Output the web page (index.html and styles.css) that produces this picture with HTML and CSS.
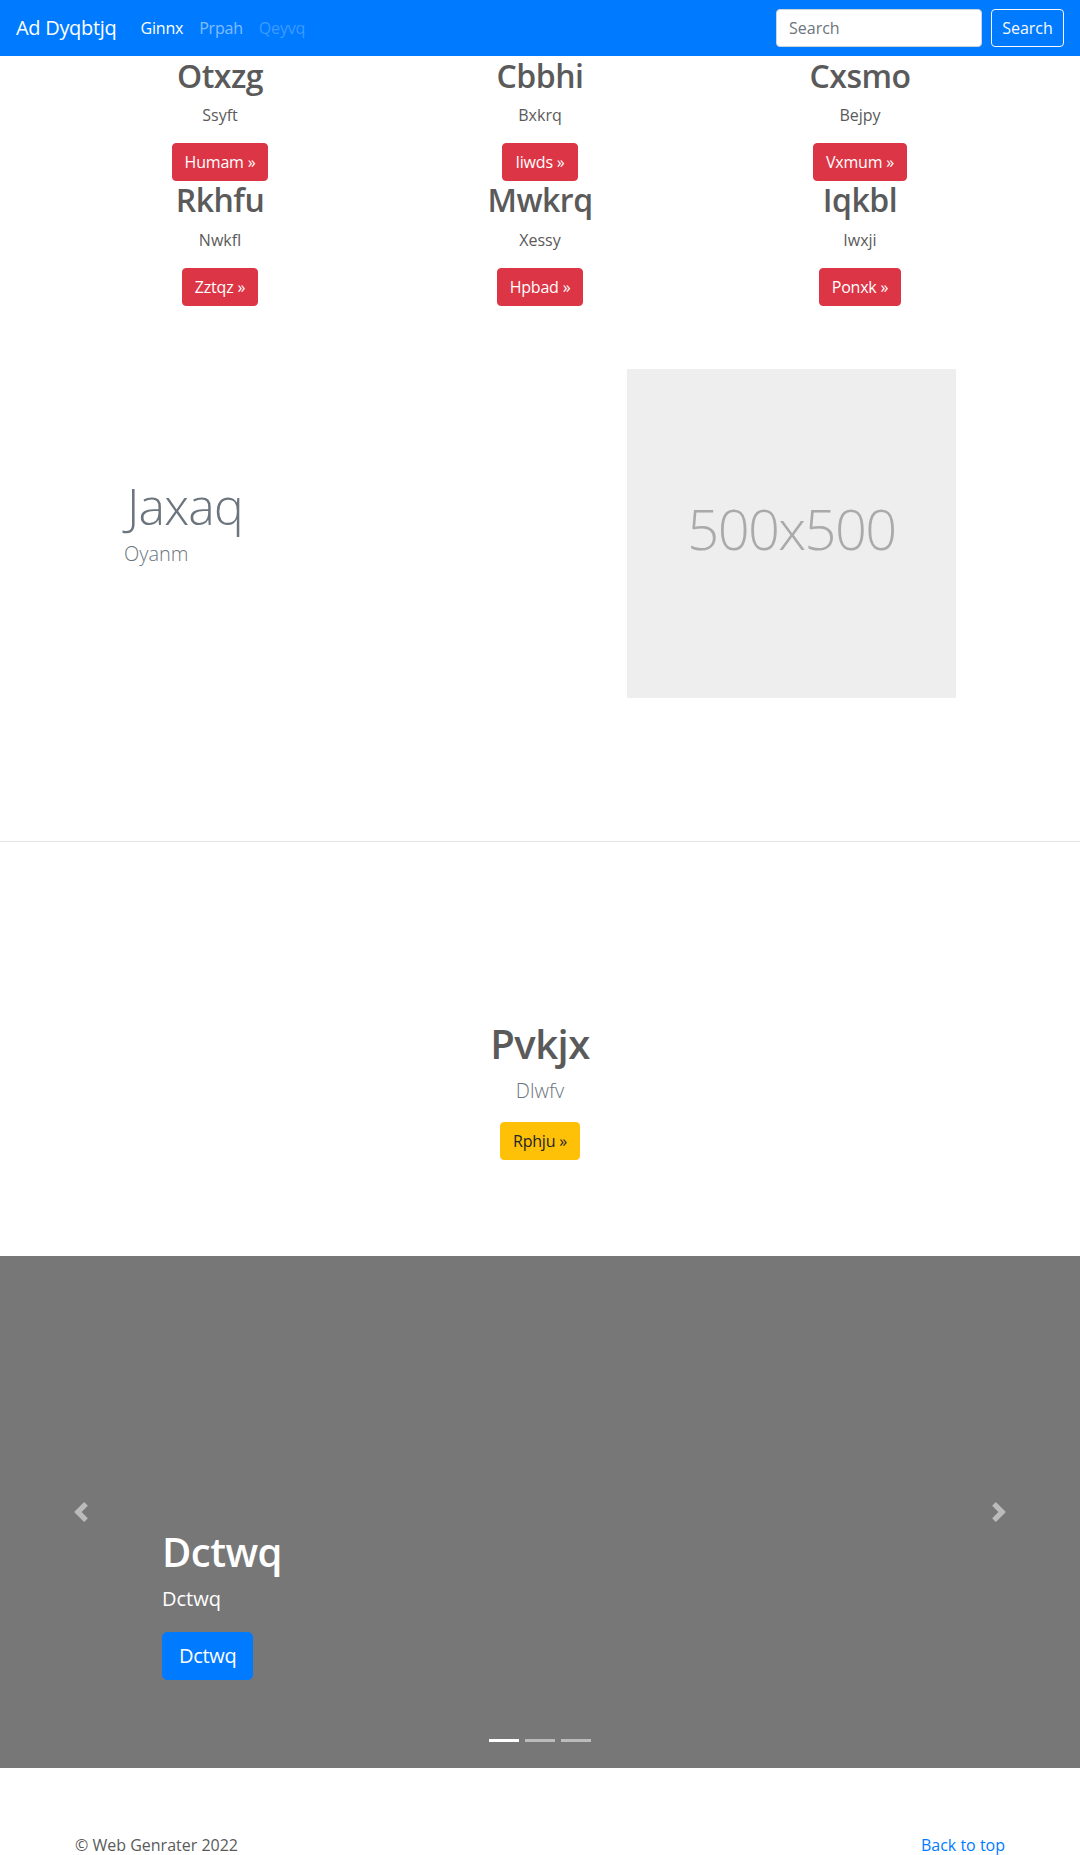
FILE: index.html
```html
<!DOCTYPE html>
<html lang="en">
<head>
<meta charset="utf-8">
<title>Ad Dyqbtjq</title>
<link rel="stylesheet" href="styles.css">
</head>
<body>
<header class="navbar">
  <a class="brand" href="#">Ad Dyqbtjq</a>
  <nav class="nav">
    <a class="nav-link active" href="#">Ginnx</a>
    <a class="nav-link" href="#">Prpah</a>
    <a class="nav-link disabled" href="#">Qeyvq</a>
  </nav>
  <form class="search">
    <input class="search-input" type="text" placeholder="Search">
    <button class="btn btn-outline-light" type="button">Search</button>
  </form>
</header>

<main>
  <section class="cards">
    <div class="card-item"><h2>Otxzg</h2><p>Ssyft</p><a class="btn btn-danger" href="#">Humam &raquo;</a></div>
    <div class="card-item"><h2>Cbbhi</h2><p>Bxkrq</p><a class="btn btn-danger" href="#">Iiwds &raquo;</a></div>
    <div class="card-item"><h2>Cxsmo</h2><p>Bejpy</p><a class="btn btn-danger" href="#">Vxmum &raquo;</a></div>
    <div class="card-item"><h2>Rkhfu</h2><p>Nwkfl</p><a class="btn btn-danger" href="#">Zztqz &raquo;</a></div>
    <div class="card-item"><h2>Mwkrq</h2><p>Xessy</p><a class="btn btn-danger" href="#">Hpbad &raquo;</a></div>
    <div class="card-item"><h2>Iqkbl</h2><p>Iwxji</p><a class="btn btn-danger" href="#">Ponxk &raquo;</a></div>
  </section>

  <section class="featurette">
    <div class="featurette-text">
      <h2 class="featurette-heading">Jaxaq</h2>
      <p class="lead">Oyanm</p>
    </div>
    <svg class="placeholder" width="329" height="329" viewBox="0 0 329 329" role="img" aria-label="500x500">
      <rect width="100%" height="100%" fill="#eee"></rect>
      <text x="50%" y="50%" fill="#aaa" dy=".3em" text-anchor="middle">500x500</text>
    </svg>
  </section>

  <hr class="divider">

  <section class="cta">
    <h1>Pvkjx</h1>
    <p class="lead">Dlwfv</p>
    <a class="btn btn-warning" href="#">Rphju &raquo;</a>
  </section>

  <section class="carousel">
    <a class="carousel-control prev" href="#" aria-label="Previous">
      <svg width="20" height="20" viewBox="0 0 8 8"><path fill="#fff" d="M5.25 0l-4 4 4 4 1.5-1.5L4.25 4l2.5-2.5L5.25 0z"/></svg>
    </a>
    <div class="carousel-caption">
      <h1>Dctwq</h1>
      <p>Dctwq</p>
      <div><a class="btn btn-lg btn-primary" href="#">Dctwq</a></div>
    </div>
    <a class="carousel-control next" href="#" aria-label="Next">
      <svg width="20" height="20" viewBox="0 0 8 8"><path fill="#fff" d="M2.75 0l-1.5 1.5L3.75 4l-2.5 2.5L2.75 8l4-4-4-4z"/></svg>
    </a>
    <ol class="indicators">
      <li class="active"></li>
      <li></li>
      <li></li>
    </ol>
  </section>
</main>

<footer class="footer">
  <p>&copy; Web Genrater 2022</p>
  <a href="#">Back to top</a>
</footer>
</body>
</html>
```

FILE: styles.css
```css
* { box-sizing: border-box; }

html, body { margin: 0; padding: 0; }

body {
  font-family: "Segoe UI", "Open Sans", "Noto Sans", "Liberation Sans", sans-serif;
  font-size: 16px;
  line-height: 1.5;
  color: #5a5a5a;
  background: #fff;
}

a { text-decoration: none; }

h1, h2, p { margin: 0; }

/* Navbar */
.navbar {
  display: flex;
  align-items: center;
  height: 56px;
  padding: 8px 16px;
  background: #007bff;
}
.brand {
  font-size: 20px;
  line-height: 30px;
  padding: 5px 0;
  margin-right: 16px;
  letter-spacing: -0.3px;
  color: #fff;
}
.nav { display: flex; }
.nav-link {
  padding: 8px;
  line-height: 24px;
  letter-spacing: -0.2px;
  color: rgba(255, 255, 255, .5);
}
.nav-link.active { color: #fff; }
.nav-link.disabled { color: rgba(255, 255, 255, .25); }

.search {
  margin-left: auto;
  display: flex;
  align-items: center;
}
.search-input {
  width: 206px;
  height: 38px;
  margin-right: 9px;
  padding: 6px 12px;
  font: inherit;
  color: #495057;
  background: #fff;
  border: 1px solid #ced4da;
  border-radius: 4px;
}
.search-input::placeholder { color: #6c757d; }

/* Buttons */
.btn {
  display: inline-block;
  padding: 6px 12px;
  font-family: inherit;
  font-size: 16px;
  line-height: 24px;
  border: 1px solid transparent;
  border-radius: 4px;
  vertical-align: middle;
  cursor: pointer;
}
.btn-outline-light {
  width: 73px;
  padding: 6px 0;
  text-align: center;
  color: #f8f9fa;
  background: transparent;
  border-color: #f8f9fa;
}
.btn-danger { color: #fff; background: #dc3545; border-color: #dc3545; letter-spacing: -0.2px; }
.btn-warning { color: #212529; background: #ffc107; border-color: #ffc107; letter-spacing: -0.2px; }
.btn-primary { color: #fff; background: #007bff; border-color: #007bff; }
.btn-lg {
  padding: 8px 16px;
  font-size: 20px;
  line-height: 30px;
  border-radius: 5px;
  letter-spacing: -0.3px;
}

/* Cards */
.cards {
  width: 960px;
  margin: 1px auto 0;
  display: grid;
  grid-template-columns: repeat(3, 1fr);
}
.card-item {
  padding: 0 15px;
  text-align: center;
}
.card-item h2 {
  font-size: 32px;
  font-weight: 600;
  line-height: 38.4px;
  letter-spacing: -0.5px;
  margin-bottom: 8px;
  color: #5a5a5a;
}
.card-item p { margin-bottom: 16px; }

/* Featurette */
.featurette {
  width: 960px;
  margin: 63px auto 0;
  display: flex;
  align-items: center;
}
.featurette-text {
  flex: 1;
  padding-left: 64px;
}
.featurette-heading {
  padding-left: 3px;
  font-size: 50px;
  font-weight: 300;
  line-height: 1;
  letter-spacing: -0.8px;
  color: #6c757d;
  margin-bottom: 8px;
}
.lead {
  font-size: 20px;
  font-weight: 300;
  line-height: 30px;
  margin-bottom: 16px;
}
.featurette .lead { color: #6c757d; }
.placeholder {
  display: block;
  flex: none;
  margin-right: 64px;
  font-size: 56px;
  font-weight: 300;
  letter-spacing: -1.6px;
}

/* Divider */
.divider {
  margin: 143px 0 0;
  border: 0;
  border-top: 1px solid rgba(0, 0, 0, .1);
}

/* Call to action */
.cta {
  text-align: center;
  padding: 178px 0 96px;
}
.cta h1 {
  font-size: 40px;
  font-weight: 600;
  line-height: 48px;
  letter-spacing: -0.5px;
  margin-bottom: 8px;
  color: #5a5a5a;
}
.cta .lead { color: #6c757d; }

/* Carousel */
.carousel {
  position: relative;
  height: 512px;
  background: #777;
  display: flex;
  align-items: center;
  justify-content: space-between;
}
.carousel-control {
  width: 15%;
  height: 100%;
  display: flex;
  align-items: center;
  justify-content: center;
  opacity: .5;
}
.carousel-control svg { display: block; }
.carousel-caption {
  position: absolute;
  left: 15%;
  right: 15%;
  bottom: 52px;
  padding: 20px 0;
  color: #fff;
}
.carousel-caption h1 {
  font-size: 40px;
  font-weight: 600;
  line-height: 48px;
  letter-spacing: -0.5px;
  margin-bottom: 8px;
}
.carousel-caption p {
  font-size: 20px;
  line-height: 30px;
  margin-bottom: 18px;
}
.carousel-caption div { display: flex; margin-bottom: 16px; }
.indicators {
  position: absolute;
  left: 15%;
  right: 15%;
  bottom: 0;
  margin: 0 0 16px;
  padding: 0;
  list-style: none;
  display: flex;
  justify-content: center;
}
.indicators li {
  width: 30px;
  height: 3px;
  margin: 10px 3px;
  background: #fff;
  opacity: .5;
}
.indicators li.active { opacity: 1; }

/* Footer */
.footer {
  width: 960px;
  margin: 65px auto 0;
  padding: 0 15px;
  display: flex;
  justify-content: space-between;
}
.footer p { margin-bottom: 16px; }
.footer a { color: #007bff; }
```
